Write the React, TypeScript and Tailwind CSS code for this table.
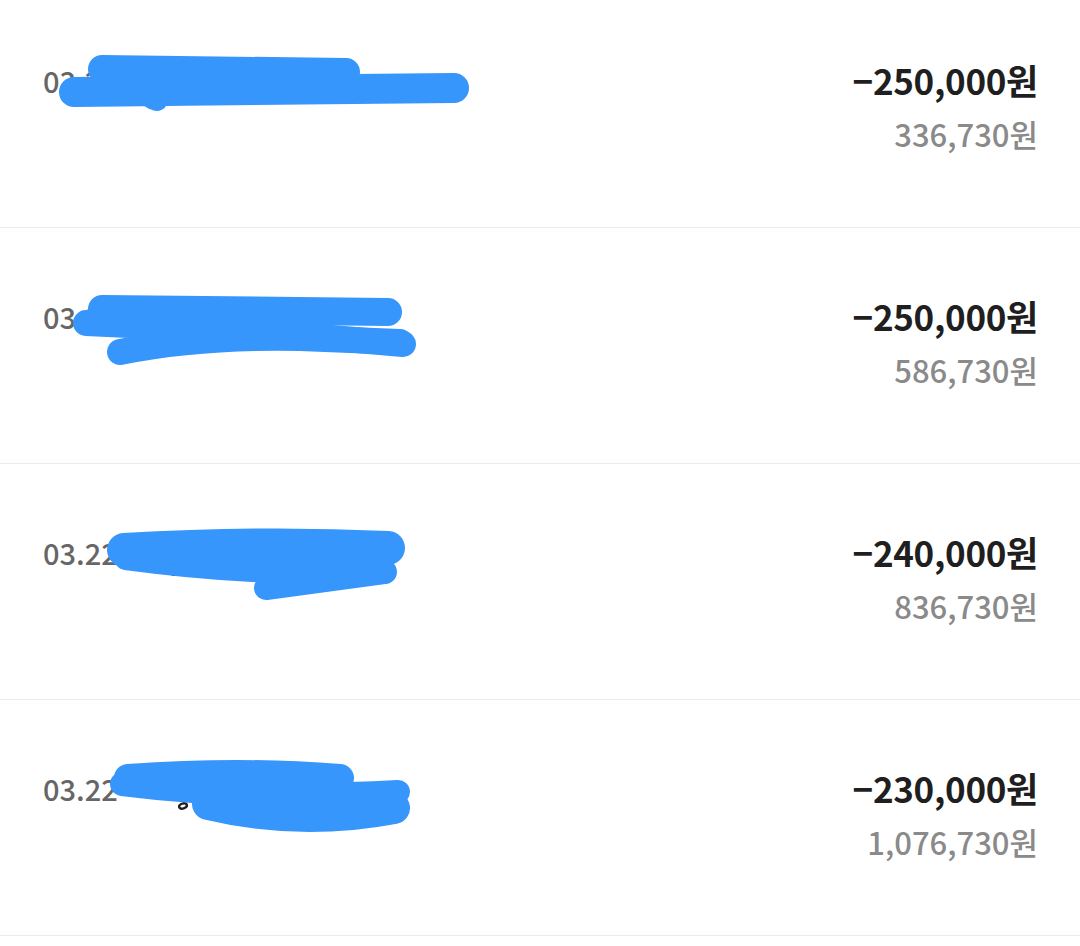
import React from "react";

type Row = {
  date: string;
  amount: string;
  balance: string;
  strokes: { d: string; w: number }[];
  dot?: [number, number];
};

const rows: Row[] = [
  {
    date: "03.22",
    amount: "−250,000원",
    balance: "336,730원",
    strokes: [
      { d: "M 102 77 L 346 80", w: 28 },
      { d: "M 74 100 L 454 96", w: 30 },
      { d: "M 152 106 L 157 108", w: 22 },
    ],
  },
  {
    date: "03.22",
    amount: "−250,000원",
    balance: "586,730원",
    strokes: [
      { d: "M 102 81 L 388 84", w: 28 },
      { d: "M 86 95 Q 250 102 403 116", w: 26 },
      { d: "M 120 124 Q 200 108 300 110 L 400 114", w: 26 },
    ],
  },
  {
    date: "03.22",
    amount: "−240,000원",
    balance: "836,730원",
    strokes: [
      { d: "M 124 86 Q 260 78 388 84", w: 34 },
      { d: "M 126 94 Q 250 111 385 108", w: 24 },
      { d: "M 266 124 L 384 108", w: 24 },
    ],
    dot: [175, 108],
  },
  {
    date: "03.22",
    amount: "−230,000원",
    balance: "1,076,730원",
    strokes: [
      { d: "M 128 78 Q 240 70 340 78", w: 28 },
      { d: "M 122 84 Q 250 100 398 92", w: 24 },
      { d: "M 208 104 Q 300 126 394 108", w: 32 },
    ],
    dot: [183, 106],
  },
];

function Scribble({ row }: { row: Row }) {
  return (
    <svg
      className="absolute inset-0 pointer-events-none"
      width="1080"
      height="235"
      viewBox="0 0 1080 235"
    >
      {row.dot && (
        <ellipse
          cx={row.dot[0]}
          cy={row.dot[1]}
          rx="4"
          ry="2.5"
          fill="none"
          stroke="#1f1f1f"
          strokeWidth="2.5"
          transform={`rotate(-15 ${row.dot[0]} ${row.dot[1]})`}
        />
      )}
      {row.strokes.map((s, i) => (
        <path
          key={i}
          d={s.d}
          fill="none"
          stroke="#3796fb"
          strokeWidth={s.w}
          strokeLinecap="round"
          strokeLinejoin="round"
        />
      ))}
    </svg>
  );
}

export default function App() {
  return (
    <div
      className="w-[1080px] h-[946px] bg-white overflow-hidden"
      style={{ fontFamily: '"Noto Sans CJK KR", "Noto Sans", sans-serif' }}
    >
      <div className="-mt-[8px]">
        {rows.map((row, i) => (
          <div
            key={i}
            className="relative h-[236px] border-b border-[#ebebeb] flex items-start justify-between pt-[68px] pl-[43px] pr-[42px]"
          >
            <div className="text-[29px] leading-[40px] font-medium text-[#666666]">
              {row.date}
            </div>
            <div className="flex flex-col items-end">
              <div className="text-[35px] leading-[40px] font-bold text-[#1f1f1f] tracking-[-0.3px]">
                {row.amount}
              </div>
              <div className="mt-[16px] text-[31px] leading-[36px] font-medium text-[#8a8a8a]">
                {row.balance}
              </div>
            </div>
            <Scribble row={row} />
          </div>
        ))}
      </div>
    </div>
  );
}
